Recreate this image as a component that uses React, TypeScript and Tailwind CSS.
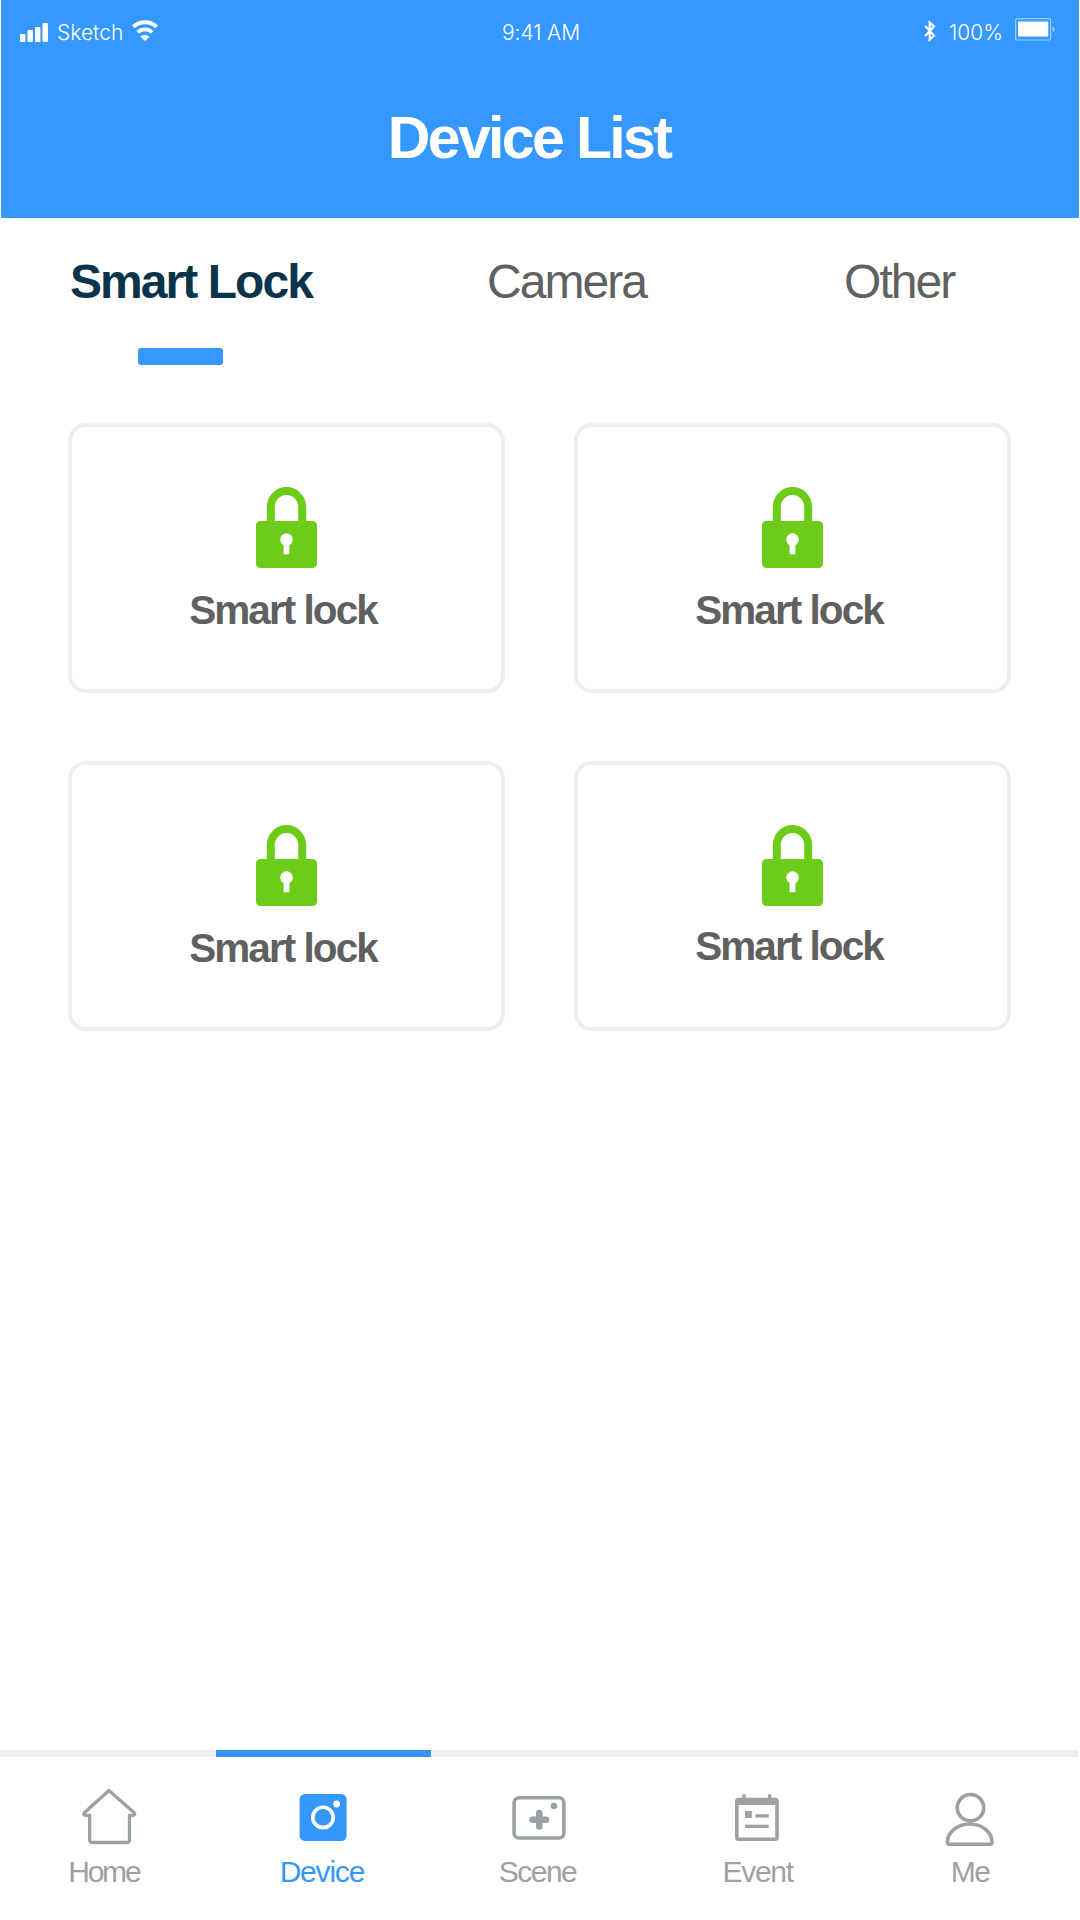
import { type ReactNode } from 'react'
import clsx from 'clsx'

const SignalIcon = () => (
  <svg width="28" height="20" viewBox="0 0 28 20" fill="currentColor">
    <rect x="0" y="11" width="5.4" height="8" rx="1" />
    <rect x="7.5" y="7" width="5.4" height="12" rx="1" />
    <rect x="15" y="4" width="5.4" height="15" rx="1" />
    <rect x="22.5" y="0" width="5.4" height="19" rx="1" />
  </svg>
)

const WifiIcon = () => (
  <svg width="26" height="21" viewBox="0 0 26 21" fill="none" stroke="currentColor">
    <path d="M1.3 6.9C7.8 0.7 18.2 0.7 24.7 6.9" strokeWidth="4" />
    <path d="M5.8 12.3C10 8.4 16 8.4 20.2 12.3" strokeWidth="3.8" />
    <path d="M13 21L8.3 16.6C11 14.3 15 14.3 17.7 16.6Z" fill="currentColor" stroke="none" />
  </svg>
)

const BluetoothIcon = () => (
  <svg width="12" height="22" viewBox="0 0 12 22" fill="none" stroke="currentColor" strokeWidth="2.2">
    <path d="M1.2 6L10 15.6L5.7 19.6V2.4L10 6.4L1.2 16" />
  </svg>
)

const BatteryIcon = () => (
  <svg width="40" height="23" viewBox="0 0 40 23">
    <rect x="0.6" y="0.6" width="35" height="21.4" rx="1.8" fill="none" stroke="currentColor" strokeOpacity="0.5" strokeWidth="1.2" />
    <rect x="3" y="3.5" width="30.3" height="15" rx="0.5" fill="currentColor" />
    <path d="M37.6 8.3Q39.6 9 39.6 11.3T37.6 14.3Z" fill="currentColor" fillOpacity="0.5" />
  </svg>
)

const LockIcon = () => (
  <svg width="61" height="81" viewBox="0 0 61 81">
    <path d="M14.8 38V20a15.7 16 0 0 1 31.4 0V38" fill="none" stroke="#6dcc1a" strokeWidth="8" />
    <rect y="34" width="61" height="47" rx="4.5" fill="#6dcc1a" />
    <circle cx="30.5" cy="52.6" r="6.3" fill="#fff" />
    <path d="M27.6 56H33.4V67.3H27.6Z" fill="#fff" />
  </svg>
)

const NavIcon = ({ children }: { children: ReactNode }) => (
  <svg
    className="mt-[30px]"
    width="60"
    height="60"
    viewBox="0 0 60 60"
    fill="none"
    stroke="currentColor"
    strokeWidth="3.6"
    strokeLinejoin="round"
  >
    {children}
  </svg>
)

const HomeIcon = () => (
  <NavIcon>
    <path d="M30.9 3.6L6.6 25.4Q4.4 28.3 8 28.3H11.7V53Q11.7 55.5 14.4 55.5H48.8Q51.5 55.5 51.5 53V28.3H54.4Q58 28.3 55.9 25.4Z" strokeWidth="3.3" />
  </NavIcon>
)

const DeviceIcon = () => (
  <NavIcon>
    <rect x="6.6" y="7" width="47" height="47" rx="5.5" fill="currentColor" stroke="none" />
    <circle cx="30" cy="30.4" r="10.2" stroke="#fff" strokeWidth="3.6" />
    <circle cx="43.6" cy="17" r="3.4" fill="#fff" stroke="none" />
  </NavIcon>
)

const SceneIcon = () => (
  <NavIcon>
    <rect x="5.1" y="10.7" width="49.8" height="40.3" rx="5" />
    <path d="M30.3 26V39.4M23.6 32.7H37" strokeWidth="6.6" strokeLinecap="round" />
    <circle cx="45" cy="19" r="3.3" fill="currentColor" stroke="none" />
  </NavIcon>
)

const EventIcon = () => (
  <NavIcon>
    <rect x="11.8" y="12.6" width="40.2" height="39.7" rx="1.8" />
    <g fill="currentColor" stroke="none">
      <path d="M11 12H53V18H11Z" />
      <path d="M17.4 7.3H20.8V12H17.4Z" />
      <path d="M43 7.3H46.4V12H43Z" />
      <path d="M20 24H26.8V31H20Z" />
      <path d="M30.4 27.3H43.7V30.6H30.4Z" />
      <path d="M20 37.7H43.7V41H20Z" />
    </g>
  </NavIcon>
)

const MeIcon = () => (
  <NavIcon>
    <circle cx="30.5" cy="20.7" r="13.2" />
    <path d="M7.4 55C7.4 46 16.5 37 29.8 37S52 46 52 55Q52 57.2 49.8 57.2H9.6Q7.4 57.2 7.4 55Z" />
  </NavIcon>
)

const StatusBar = () => (
  <div className="grid h-[65px] grid-cols-3 items-center pl-[19px] pr-[24px] font-['Inter',sans-serif] text-[21px] font-light leading-none">
    <div className="flex items-center">
      <SignalIcon />
      <span className="ml-[9px]">Sketch</span>
      <span className="ml-[9px] pb-1">
        <WifiIcon />
      </span>
    </div>
    <span className="pl-[7px] text-center tracking-[-0.1px]">9:41 AM</span>
    <div className="flex items-center justify-end">
      <span className="pb-[3px]">
        <BluetoothIcon />
      </span>
      <span className="ml-[13px]">100%</span>
      <span className="ml-[12px] pb-[6px]">
        <BatteryIcon />
      </span>
    </div>
  </div>
)

const tabs = ['Smart Lock', 'Camera', 'Other']

// the fourth label sits slightly closer to its icon
const devices = [
  { id: 1, name: 'Smart lock', labelClass: 'mt-[22px]' },
  { id: 2, name: 'Smart lock', labelClass: 'mt-[22px]' },
  { id: 3, name: 'Smart lock', labelClass: 'mt-[22px]' },
  { id: 4, name: 'Smart lock', labelClass: 'mt-[20px]' },
]

const navItems = [
  { label: 'Home', icon: <HomeIcon />, labelClass: 'mr-[8px] tracking-[-2.2px]' },
  { label: 'Device', icon: <DeviceIcon />, labelClass: 'mr-[3px] tracking-[-1.2px]' },
  { label: 'Scene', icon: <SceneIcon />, labelClass: 'mr-[3px] tracking-[-1.5px]' },
  { label: 'Event', icon: <EventIcon />, labelClass: 'ml-[6px] tracking-[-1.3px]' },
  { label: 'Me', icon: <MeIcon />, labelClass: 'tracking-[-1.5px]' },
]

type DeviceCardProps = {
  name: string
  labelClass: string
}
const DeviceCard = ({ name, labelClass }: DeviceCardProps) => (
  <li className="flex h-[270px] flex-col items-center rounded-[18px] border-4 border-[#eeeeee] pt-[60px]">
    <LockIcon />
    <span
      className={clsx(
        'mr-[7px] whitespace-nowrap text-[40.5px] font-bold leading-none tracking-[-1.95px] text-[#606060]',
        labelClass
      )}
    >
      {name}
    </span>
  </li>
)

const App = () => {
  const active = 'Device'
  return (
    <div className="flex h-[1920px] w-[1080px] flex-col overflow-hidden bg-white font-['Liberation_Sans',Arial,sans-serif]">
      <header className="mx-px h-[218px] bg-[#3498ff] text-white">
        <StatusBar />
        <h1 className="mt-[44px] pr-[22px] text-center text-[59px] font-bold leading-none tracking-[-2.65px]">
          Device List
        </h1>
      </header>

      <div className="grid grid-cols-[417px_357px_auto] pl-[70px] pt-[40px] text-[48px] leading-none tracking-[-1.95px]">
        {tabs.map((tab, i) => (
          <div key={tab} className={i === 0 ? 'font-bold text-[#0a3449]' : 'text-[#606060]'}>
            {tab}
            {i === 0 && <div className="ml-[68px] mt-[42px] h-[17px] w-[85px] rounded-[3px] bg-[#3498ff]" />}
          </div>
        ))}
      </div>

      <ul className="mt-[58px] grid grid-cols-[437px_437px] gap-x-[69px] gap-y-[68px] pl-[68px]">
        {devices.map((device) => (
          <DeviceCard key={device.id} name={device.name} labelClass={device.labelClass} />
        ))}
      </ul>

      <nav className="mr-[2px] mt-auto grid h-[170px] grid-cols-5">
        {navItems.map((item) => {
          const isActive = item.label === active
          return (
            <div
              key={item.label}
              className={clsx(
                'flex flex-col items-center border-t-[7px]',
                isActive ? 'border-[#3793f5] text-[#3498fa]' : 'border-[#ededed] text-[#9ca1a4]'
              )}
            >
              {item.icon}
              <span className={clsx('mt-[10px] text-[30px] leading-none', item.labelClass)}>{item.label}</span>
            </div>
          )
        })}
      </nav>
    </div>
  )
}

export default App
